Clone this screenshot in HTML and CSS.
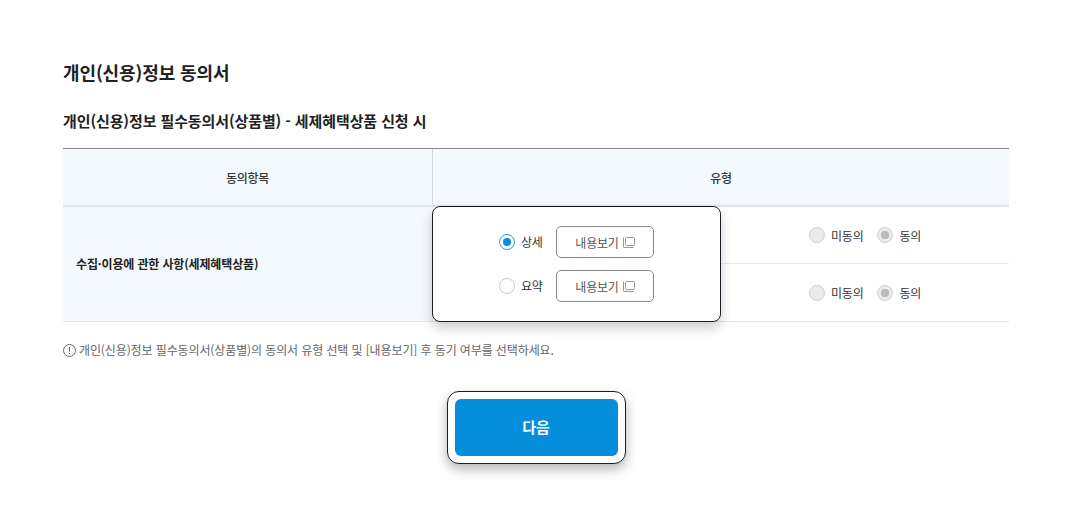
FILE: index.html
```html
<!DOCTYPE html>
<html lang="ko">
<head>
  <meta charset="UTF-8" />
  <title>개인(신용)정보 동의서</title>
  <link rel="stylesheet" href="styles.css">
</head>
<body>

<div class="container">
  <h2 class="page-title">개인(신용)정보 동의서</h2>
  <h3 class="sub-title">개인(신용)정보 필수동의서(상품별) - 세제혜택상품 신청 시</h3>

  <div class="agree-table">
    <div class="head-cell head-left">동의항목</div>
    <div class="head-cell">유형</div>
    <div class="item-name">수집·이용에 관한 사항(세제혜택상품)</div>
    <div class="type-col">
      <div class="type-row">
        <span class="radio-off"></span><span class="radio-label">미동의</span>
        <span class="radio-on"></span><span class="radio-label">동의</span>
      </div>
      <div class="type-row">
        <span class="radio-off"></span><span class="radio-label">미동의</span>
        <span class="radio-on"></span><span class="radio-label">동의</span>
      </div>
    </div>

    <!-- 상세/요약 팝업 -->
    <div class="focus-box">
      <div class="focus-row">
        <span class="radio-blue"></span><span class="focus-label">상세</span>
        <a class="view-btn" href="#">내용보기
          <svg class="copy-icon" width="12" height="11" viewBox="0 0 12 11"><path d="M.5 .5v9.5a.5.5 0 0 0 .5.5h9.5M3.5.5h7a1 1 0 0 1 1 1v6a1 1 0 0 1-1 1h-7a1 1 0 0 1-1-1v-6a1 1 0 0 1 1-1z" fill="none" stroke="#999" stroke-width="1"/></svg>
        </a>
      </div>
      <div class="focus-row">
        <span class="radio-empty"></span><span class="focus-label">요약</span>
        <a class="view-btn" href="#">내용보기
          <svg class="copy-icon" width="12" height="11" viewBox="0 0 12 11"><path d="M.5 .5v9.5a.5.5 0 0 0 .5.5h9.5M3.5.5h7a1 1 0 0 1 1 1v6a1 1 0 0 1-1 1h-7a1 1 0 0 1-1-1v-6a1 1 0 0 1 1-1z" fill="none" stroke="#999" stroke-width="1"/></svg>
        </a>
      </div>
    </div>
  </div>

  <p class="notice">
    <svg class="info-icon" width="13" height="13" viewBox="0 0 13 13"><circle cx="6.5" cy="6.5" r="6" fill="none" stroke="#666"/><path d="M6.5 3v4.5M6.5 9v1" fill="none" stroke="#666"/></svg>
    개인(신용)정보 필수동의서(상품별)의 동의서 유형 선택 및 [내용보기] 후 동기 여부를 선택하세요.
  </p>

  <div class="btn-area">
    <div class="btn-focus"><a class="next-btn" href="#">다음</a></div>
  </div>
</div>

</body>
</html>
```

FILE: styles.css
```css
body {
  margin: 0;
  background-color: #fff;
  color: #222;
  font-family: "Noto Sans CJK KR", "Noto Sans", sans-serif;
}

.container {
  padding: 58px 63px 47px;
}

.page-title {
  margin: 0;
  font-size: 18px;
  line-height: 28px;
  font-weight: 700;
  letter-spacing: -0.1px;
}

.sub-title {
  margin: 23px 0 0;
  font-size: 15px;
  line-height: 24px;
  font-weight: 700;
  letter-spacing: -0.1px;
}

/* 동의 표 */
.agree-table {
  position: relative;
  display: grid;
  grid-template-columns: 370px 1fr;
  grid-template-rows: 58px 114px;
  margin-top: 15px;
  border-top: 1px solid #8a8c94;
  border-bottom: 1px solid #e6e6e6;
}

.head-cell {
  display: flex;
  align-items: center;
  justify-content: center;
  background-color: #f4f9fd;
  border-bottom: 2px solid #e2e4e6;
  font-size: 12px;
  font-weight: 500;
  color: #333;
  letter-spacing: -0.3px;
}

.head-left {
  border-right: 1px solid #d6d8da;
}

.item-name {
  display: flex;
  align-items: center;
  padding: 0 0 2px 13px;
  background-color: #f4f9fd;
  font-size: 12px;
  font-weight: 700;
  letter-spacing: -0.15px;
}

.type-col {
  display: grid;
  grid-template-rows: 56px 57px;
  row-gap: 1px;
  background-color: #e8e8e8;
}

.type-row {
  display: flex;
  align-items: center;
  padding-left: 376px;
  background-color: #fff;
}

.radio-off,
.radio-on,
.radio-blue,
.radio-empty {
  box-sizing: border-box;
  width: 16px;
  height: 16px;
  border-radius: 50%;
  flex: none;
}

.radio-off {
  background-color: #ebebeb;
  border: 1px solid #d0d0d0;
}

.radio-on {
  margin-left: 13px;
  background: radial-gradient(circle, #bbb 0, #bbb 4px, #ebebeb 4.5px);
  border: 1px solid #d0d0d0;
}

.radio-label {
  margin-left: 6px;
  font-size: 12px;
  letter-spacing: -0.2px;
  color: #333;
}

.radio-on + .radio-label {
  margin-left: 7px;
}

/* 포커스 박스 */
.focus-box {
  position: absolute;
  left: 369px;
  top: 57px;
  box-sizing: border-box;
  width: 289px;
  height: 116px;
  padding: 19px 0 0 66px;
  background-color: #fff;
  border: 1px solid #1c1c28;
  border-radius: 8px;
  box-shadow: 0 6px 12px rgba(0, 0, 0, 0.2);
}

.focus-row {
  display: flex;
  align-items: center;
  height: 32px;
  margin-bottom: 12px;
}

.radio-blue {
  padding: 3px;
  background-color: #048edc;
  background-clip: content-box;
  border: 1px solid #2e9fe6;
}

.radio-empty {
  background-color: #fff;
  border: 1px solid #ccc;
}

.focus-label {
  width: 35px;
  margin-left: 6px;
  padding-bottom: 2px;
  font-size: 12px;
  letter-spacing: -0.3px;
  color: #333;
}

.view-btn {
  box-sizing: border-box;
  display: flex;
  align-items: center;
  justify-content: center;
  gap: 4px;
  width: 98px;
  height: 32px;
  border: 1px solid #8a8a8a;
  border-radius: 5px;
  font-size: 12px;
  letter-spacing: -0.2px;
  color: #555;
  text-decoration: none;
}

.notice {
  display: flex;
  align-items: center;
  gap: 3px;
  margin: 19px 0 0;
  font-size: 12px;
  line-height: 18px;
  letter-spacing: -0.11px;
  color: #666;
}

.btn-area {
  display: flex;
  justify-content: center;
  margin-top: 32px;
}

.btn-focus {
  box-sizing: border-box;
  width: 179px;
  height: 73px;
  padding: 7px;
  background-color: #fff;
  border: 1px solid #1c1c28;
  border-radius: 12px;
  box-shadow: 0 5px 12px rgba(0, 0, 0, 0.3);
}

.next-btn {
  box-sizing: border-box;
  display: flex;
  align-items: center;
  justify-content: center;
  height: 57px;
  padding-bottom: 2px;
  background-color: #048edc;
  border-radius: 6px;
  color: #fff;
  font-size: 15px;
  font-weight: 700;
  text-decoration: none;
}
```
